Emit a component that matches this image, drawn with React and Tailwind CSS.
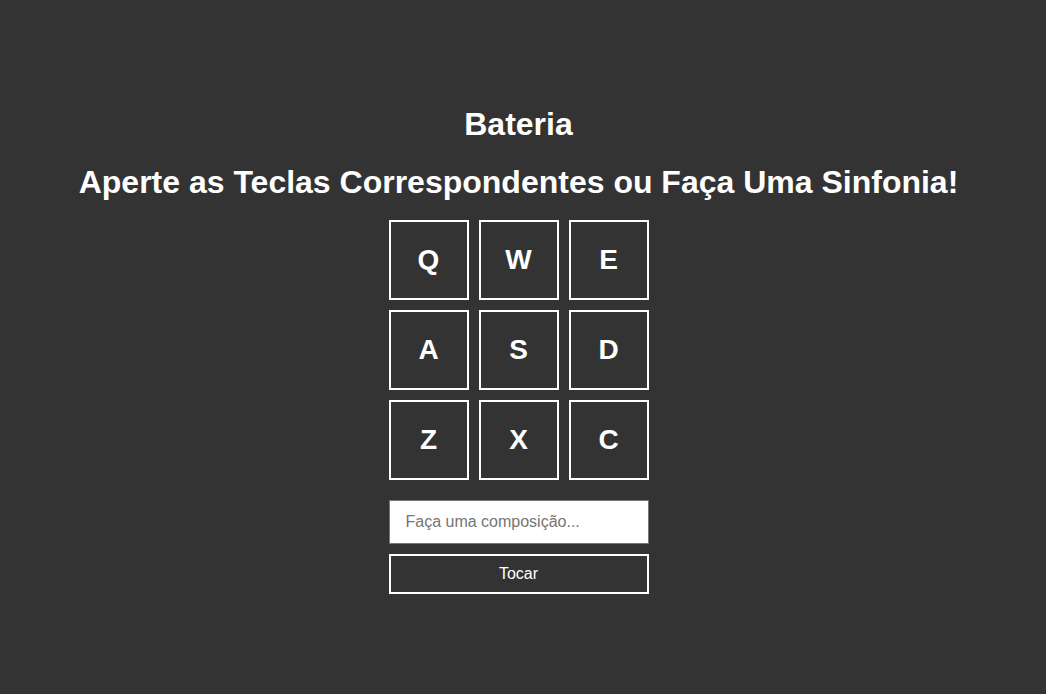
import React, { useState } from 'react';

const keys = ['Q', 'W', 'E', 'A', 'S', 'D', 'Z', 'X', 'C'];

const App = () => {
  const [song, setSong] = useState('');

  return (
    <div className="min-h-screen bg-[#333333] text-white font-['Liberation_Sans',Arial,sans-serif] flex flex-col items-center pt-[106px] pr-[9px]">
      <h1 className="text-[32px] font-bold leading-[37px]">Bateria</h1>
      <h1 className="text-[32px] font-bold leading-[37px] mt-[21px]">
        Aperte as Teclas Correspondentes ou Faça Uma Sinfonia!
      </h1>
      <div className="grid grid-cols-3 gap-[10px] mt-[19px]">
        {keys.map((k) => (
          <div
            key={k}
            className="w-20 h-20 border-2 border-white flex items-center justify-center text-[28px] font-bold"
          >
            {k}
          </div>
        ))}
      </div>
      <div className="flex flex-col gap-[10px] mt-5 w-[260px]">
        <input
          type="text"
          value={song}
          onChange={(e) => setSong(e.target.value)}
          placeholder="Faça uma composição..."
          className="h-11 bg-white border border-[#767676] px-4 text-base text-black placeholder:text-[#757575] outline-none"
        />
        <button className="h-10 border-2 border-white text-base text-white">Tocar</button>
      </div>
    </div>
  );
};

export default App;
